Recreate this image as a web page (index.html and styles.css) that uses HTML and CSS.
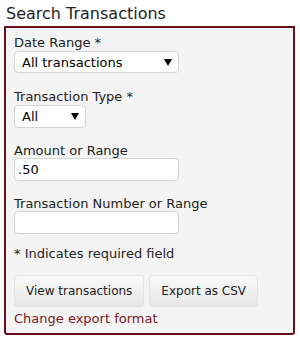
FILE: index.html
```html
<!DOCTYPE html>
<html lang="en">
<head>
    <meta charset="UTF-8">
    <meta name="viewport" content="width=device-width, initial-scale=1.0">
    <title>Search Transactions</title>
    <link rel="stylesheet" href="styles.css">
</head>
<body>
    <h1 class="title">Search Transactions</h1>
    <form class="search-box">
        <div class="field">
            <label class="label">Date Range *</label>
            <div class="select-wrap wide">
                <select class="select">
                    <option>All transactions</option>
                </select>
                <svg class="arrow" width="8" height="7" viewBox="0 0 8 7"><path d="M0 0H8L4 7Z" fill="#000"/></svg>
            </div>
        </div>
        <div class="field">
            <label class="label">Transaction Type *</label>
            <div class="select-wrap narrow">
                <select class="select">
                    <option>All</option>
                </select>
                <svg class="arrow" width="8" height="7" viewBox="0 0 8 7"><path d="M0 0H8L4 7Z" fill="#000"/></svg>
            </div>
        </div>
        <div class="field text-field">
            <label class="label">Amount or Range</label>
            <input class="input" type="text" value=".50">
        </div>
        <div class="field text-field">
            <label class="label">Transaction Number or Range</label>
            <input class="input" type="text" value="">
        </div>
        <p class="note">* Indicates required field</p>
        <div class="buttons">
            <button type="button" class="btn">View transactions</button>
            <button type="button" class="btn">Export as CSV</button>
        </div>
        <a href="#" class="link">Change export format</a>
    </form>
</body>
</html>
```

FILE: styles.css
```css
body {
    font-family: "DejaVu Sans", Verdana, sans-serif;
    font-size: 13px;
    color: #222;
    background-color: #fff;
    margin: 0;
    padding: 0;
}

.title {
    font-size: 16px;
    font-weight: normal;
    color: #222;
    margin: 0;
    padding: 4px 0 0 6px;
    height: 22px;
}

.search-box {
    display: flex;
    flex-direction: column;
    margin: 0 5px 0 4px;
    padding: 6px 8px 6px 8px;
    background-color: #f4f4f4;
    border: 2px solid #6b0f1c;
    border-radius: 0 0 3px 3px;
    height: 293px;
}

.field {
    display: flex;
    flex-direction: column;
    align-items: flex-start;
    margin-bottom: 14px;
}
.field:first-child {
    margin-bottom: 15px;
}

.label {
    line-height: 17px;
    margin-bottom: 0;
}

.text-field {
    margin-bottom: 14px;
}
.text-field .label {
    margin-bottom: -1px;
}

.select-wrap {
    position: relative;
    height: 22px;
}
.select-wrap.wide {
    width: 165px;
}
.select-wrap.narrow {
    width: 72px;
    height: 23px;
}

.select {
    appearance: none;
    -webkit-appearance: none;
    width: 100%;
    height: 100%;
    font-family: inherit;
    font-size: 13px;
    color: #000;
    background: #fff;
    border: 1px solid #d4d4d4;
    border-radius: 4px;
    padding: 0 7px;
    margin: 0;
}

.arrow {
    position: absolute;
    right: 7px;
    top: 8px;
    pointer-events: none;
}

.input {
    width: 165px;
    height: 23px;
    box-sizing: border-box;
    font-family: inherit;
    font-size: 13px;
    color: #000;
    background: #fff;
    border: 1px solid #d4d4d4;
    border-radius: 4px;
    padding: 0 3px;
    margin: 0;
}

.note {
    margin: -3px 0 13px 0;
    line-height: 17px;
}

.buttons {
    display: flex;
    gap: 5px;
}

.btn {
    font-family: inherit;
    font-size: 12px;
    color: #222;
    height: 32px;
    padding: 0 11px;
    background: linear-gradient(#fafafa, #e6e6e6);
    border: 1px solid #e4e4e4;
    border-radius: 3px;
}

.link {
    color: #7a1a22;
    text-decoration: none;
    margin-top: 3px;
    line-height: 17px;
}
```
